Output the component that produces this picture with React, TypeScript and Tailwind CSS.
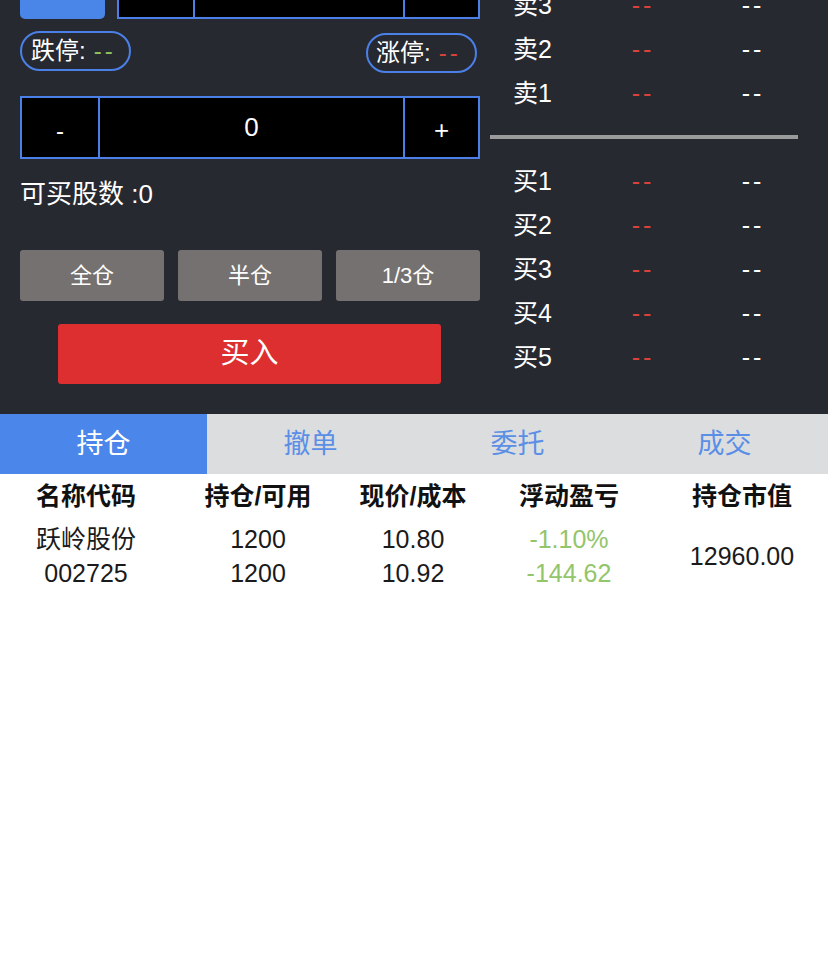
import React from "react";

const sells = ["卖5", "卖4", "卖3", "卖2", "卖1"];
const buys = ["买1", "买2", "买3", "买4", "买5"];

function BookRow({ label }: { label: string }) {
  return (
    <div className="flex h-[44px] items-center text-[25px] text-white">
      <div className="w-[98px] pl-[23px]">{label}</div>
      <div className="w-[110px] text-center text-[#d8433a] tracking-[3px]">--</div>
      <div className="w-[110px] text-center tracking-[3px]">--</div>
    </div>
  );
}

function Stepper({ h, left, right, value }: { h: string; left: string; right: string; value: string }) {
  return (
    <div className={`flex ${h} border-2 border-[#4a80e8] bg-black text-white`}>
      <div className={`${left} flex items-center justify-center border-r-2 border-[#4a80e8] text-[24px] pt-[6px]`}>-</div>
      <div className="flex flex-1 items-center justify-center text-[26px]">{value}</div>
      <div className={`${right} flex items-center justify-center border-l-2 border-[#4a80e8] text-[26px] pt-[6px]`}>+</div>
    </div>
  );
}

export default function App() {
  return (
    <div className="w-[828px] min-h-[960px] bg-white font-['Liberation_Sans','Noto_Sans_CJK_SC',sans-serif]">
      <div className="flex h-[414px] items-start overflow-hidden bg-[#272931]">
        <div className="-mt-[44px] flex w-[490px] flex-col pl-[20px] pr-[10px]">
          <div className="flex h-[63px]">
            <div className="w-[85px] rounded-[5px] bg-[#4a86e8]" />
            <div className="ml-[12px] flex-1">
              <Stepper h="h-[63px]" left="w-[76px]" right="w-[75px]" value="市价委托" />
            </div>
          </div>

          <div className="mt-[12px] flex items-start justify-between">
            <div className="flex h-[40px] w-[111px] items-center rounded-full border-2 border-[#4a80e8] pl-[9px] text-[24px] text-white">
              跌停:<span className="ml-[8px] text-[#8fc15c] tracking-[3px]">--</span>
            </div>
            <div className="mr-[3px] mt-[2px] flex h-[40px] w-[111px] items-center rounded-full border-2 border-[#4a80e8] pl-[8px] text-[24px] text-white">
              涨停:<span className="ml-[8px] text-[#d8433a] tracking-[3px]">--</span>
            </div>
          </div>

          <div className="mt-[23px]">
            <Stepper h="h-[63px]" left="w-[78px]" right="w-[75px]" value="0" />
          </div>

          <div className="mt-[18px] h-[34px] text-[26px] leading-[34px] text-white">可买股数 :0</div>

          <div className="mt-[39px] grid h-[51px] grid-cols-3 gap-[14px]">
            {["全仓", "半仓", "1/3仓"].map((t) => (
              <div key={t} className="flex items-center justify-center rounded-[3px] bg-[#757170] text-[22px] text-white">
                {t}
              </div>
            ))}
          </div>

          <div className="ml-[38px] mt-[23px] flex h-[60px] w-[383px] items-center justify-center rounded-[3px] bg-[#dd2f30] text-[29px] text-white">
            买入
          </div>
        </div>

        <div className="-mt-[104px] w-[318px]">
          {sells.map((s) => (
            <BookRow key={s} label={s} />
          ))}
          <div className="mb-[21px] mt-[19px] h-[4px] w-[308px] bg-[#9a9a9a]" />
          {buys.map((s) => (
            <BookRow key={s} label={s} />
          ))}
        </div>
      </div>

      <div className="grid h-[60px] grid-cols-4 bg-[#dcdddf] text-[27px]">
        <div className="flex items-center justify-center bg-[#4b87eb] text-white">持仓</div>
        <div className="flex items-center justify-center text-[#5b8fe6]">撤单</div>
        <div className="flex items-center justify-center text-[#5b8fe6]">委托</div>
        <div className="flex items-center justify-center text-[#5b8fe6]">成交</div>
      </div>

      <div className="grid h-[46px] grid-cols-[172px_172px_138px_174px_172px] items-center text-center text-[25px] font-bold text-[#111]">
        <div>名称代码</div>
        <div>持仓/可用</div>
        <div>现价/成本</div>
        <div>浮动盈亏</div>
        <div>持仓市值</div>
      </div>

      <div className="mt-[2px] grid grid-cols-[172px_172px_138px_174px_172px] items-center text-center text-[25px] leading-[34px] text-[#1a1a1a]">
        <div>
          <div>跃岭股份</div>
          <div>002725</div>
        </div>
        <div>
          <div>1200</div>
          <div>1200</div>
        </div>
        <div>
          <div>10.80</div>
          <div>10.92</div>
        </div>
        <div className="text-[#93c56a]">
          <div>-1.10%</div>
          <div>-144.62</div>
        </div>
        <div>12960.00</div>
      </div>
    </div>
  );
}
